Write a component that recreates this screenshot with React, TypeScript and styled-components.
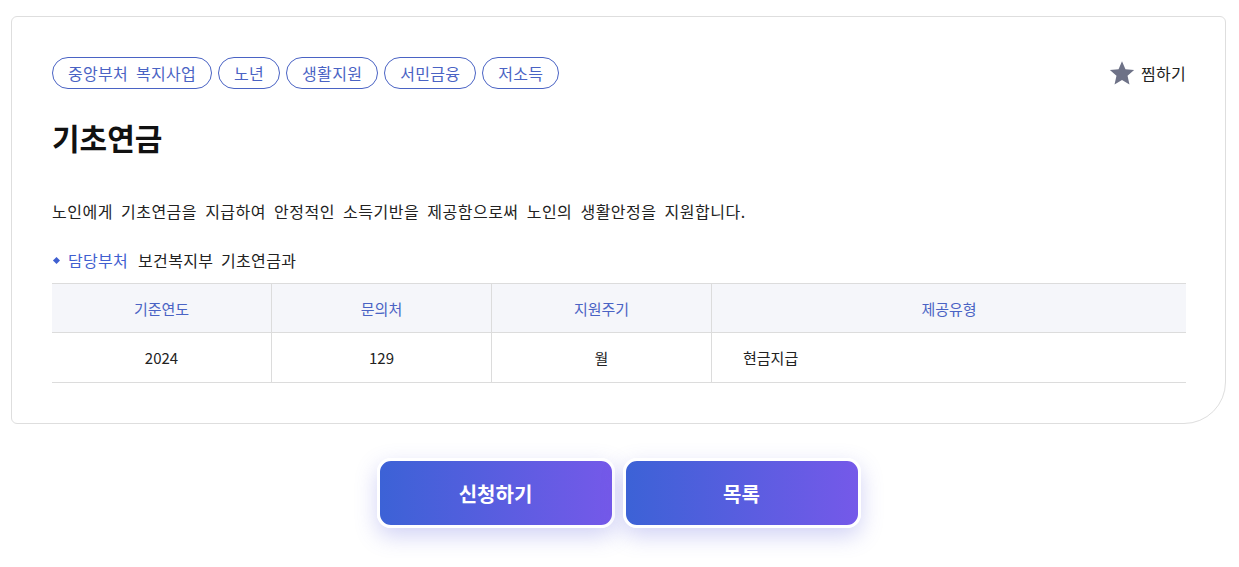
import styled, { createGlobalStyle } from 'styled-components';

const GlobalStyle = createGlobalStyle`
  body {
    margin: 0;
    background: #ffffff;
    font-family: 'Noto Sans CJK KR', 'Noto Sans', sans-serif;
    color: #222;
  }
`;

const Page = styled.div`
  padding: 16px 13px 30px 11px;
`;

const Card = styled.section`
  border: 1px solid #dedede;
  border-radius: 6px 6px 42px 6px;
  padding: 40px 39px 40px 40px;
  background: #fff;
`;

const TopRow = styled.div`
  display: flex;
  justify-content: space-between;
  align-items: center;
`;

const Tags = styled.div`
  display: flex;
  gap: 6px;
`;

const Tag = styled.span`
  display: inline-flex;
  align-items: center;
  height: 32px;
  box-sizing: border-box;
  padding: 0 15px;
  border: 1px solid #4a63c4;
  border-radius: 16px;
  color: #4a63c4;
  font-size: 16px;
  letter-spacing: 0.3px;
  word-spacing: 4px;
`;

const Wish = styled.button`
  display: flex;
  align-items: center;
  gap: 6px;
  border: 0;
  background: none;
  padding: 0;
  font-family: inherit;
  font-size: 16px;
  letter-spacing: 0.3px;
  color: #222;
  cursor: pointer;
`;

const Title = styled.h1`
  margin: 28px 0 0;
  font-size: 30px;
  font-weight: 700;
  color: #111;
  line-height: 40px;
`;

const Desc = styled.p`
  margin: 42px 0 0;
  font-size: 16px;
  line-height: 24px;
  letter-spacing: 0.5px;
  word-spacing: 4px;
  color: #222;
`;

const Dept = styled.div`
  margin-top: 25px;
  display: flex;
  align-items: center;
  font-size: 16px;
  line-height: 24px;
  letter-spacing: 0.3px;
  word-spacing: 4px;
`;

const Bullet = styled.span`
  width: 5px;
  height: 5px;
  background: #3f5fd0;
  transform: rotate(45deg);
  margin: 0 9px 0 2px;
`;

const DeptLabel = styled.span`
  color: #3f5fd0;
  margin-right: 10px;
`;

const Table = styled.table`
  width: 100%;
  margin-top: 11px;
  border-collapse: collapse;
  table-layout: fixed;
  font-size: 15px;
`;

const Th = styled.th<{ $w?: number }>`
  width: ${(p) => (p.$w ? `${p.$w}px` : 'auto')};
  height: 48px;
  padding: 0;
  background: #f5f6fa;
  color: #4a63c4;
  font-weight: 400;
  border-top: 1px solid #dcdcdc;
  border-bottom: 1px solid #dcdcdc;
  border-left: 1px solid #dcdcdc;
  &:first-child { border-left: 0; }
`;

const Td = styled.td<{ $left?: boolean }>`
  height: 49px;
  text-align: ${(p) => (p.$left ? 'left' : 'center')};
  padding: ${(p) => (p.$left ? '0 0 0 31px' : '0')};
  color: #222;
  border-bottom: 1px solid #dcdcdc;
  border-left: 1px solid #dcdcdc;
  &:first-child { border-left: 0; }
`;

const Actions = styled.div`
  display: flex;
  justify-content: center;
  gap: 8px;
  margin-top: 34px;
`;

const ActionButton = styled.button`
  width: 238px;
  height: 70px;
  border: 3px solid #fff;
  border-radius: 14px;
  background: linear-gradient(90deg, #3c62d6 0%, #7559e9 100%);
  color: #fff;
  font-family: inherit;
  font-size: 20px;
  font-weight: 700;
  box-shadow: 0 8px 22px rgba(88, 92, 220, 0.28);
  cursor: pointer;
`;

const StarIcon = () => (
  <svg width="26" height="26" viewBox="0 0 24 24" aria-hidden>
    <path
      d="M12 1.2l3.2 7.4 8 .7-6.1 5.3 1.8 7.9L12 18.4l-6.9 4.1 1.8-7.9L.8 9.3l8-.7z"
      fill="#6e7287"
    />
  </svg>
);

const tags = ['중앙부처 복지사업', '노년', '생활지원', '서민금융', '저소득'];

export default function App() {
  return (
    <>
      <GlobalStyle />
      <Page>
        <Card>
          <TopRow>
            <Tags>
              {tags.map((t) => (
                <Tag key={t}>{t}</Tag>
              ))}
            </Tags>
            <Wish>
              <StarIcon />
              찜하기
            </Wish>
          </TopRow>
          <Title>기초연금</Title>
          <Desc>노인에게 기초연금을 지급하여 안정적인 소득기반을 제공함으로써 노인의 생활안정을 지원합니다.</Desc>
          <Dept>
            <Bullet />
            <DeptLabel>담당부처</DeptLabel>
            보건복지부 기초연금과
          </Dept>
          <Table>
            <thead>
              <tr>
                <Th $w={219}>기준연도</Th>
                <Th $w={219}>문의처</Th>
                <Th $w={219}>지원주기</Th>
                <Th>제공유형</Th>
              </tr>
            </thead>
            <tbody>
              <tr>
                <Td>2024</Td>
                <Td>129</Td>
                <Td>월</Td>
                <Td $left>현금지급</Td>
              </tr>
            </tbody>
          </Table>
        </Card>
        <Actions>
          <ActionButton>신청하기</ActionButton>
          <ActionButton>목록</ActionButton>
        </Actions>
      </Page>
    </>
  );
}
